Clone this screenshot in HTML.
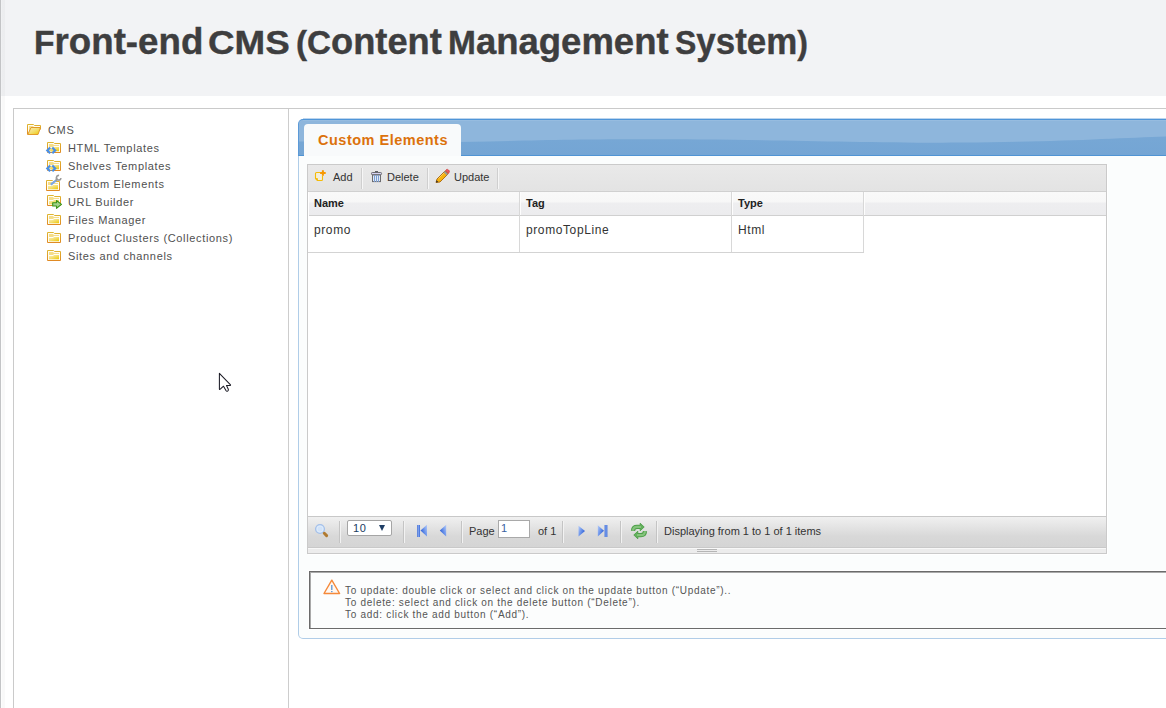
<!DOCTYPE html>
<html><head><meta charset="utf-8">
<style>
*{box-sizing:border-box;margin:0;padding:0}
html,body{width:1166px;height:708px;overflow:hidden;background:#fff;font-family:"Liberation Sans",sans-serif}
.abs{position:absolute}
svg{position:absolute;overflow:visible}
#lstrip{left:0;top:0;width:1px;height:708px;background:#c3c4c6}
#lstrip2{left:1px;top:0;width:4px;height:708px;background:linear-gradient(90deg,rgba(0,0,0,0.008) 1px,rgba(0,0,0,0.025) 1px)}
#header{left:1px;top:0;width:1165px;height:96px;background:#f2f3f5}
.tw{top:22px;font-weight:bold;color:#3e3e3f;white-space:nowrap;line-height:40px;font-size:36px;-webkit-text-stroke:0.4px #3e3e3f;transform-origin:0 0}
.tw .c{font-size:33px}
#box{left:13px;top:108px;width:1160px;height:620px;border:1px solid #cacaca;background:#fff}
#divider{left:288px;top:109px;width:1px;height:600px;background:#cdcdcd}
.tree{font-size:11px;color:#505050;white-space:nowrap;line-height:14px;letter-spacing:0.65px}
#pbody{left:298px;top:150px;width:900px;height:489px;border:1px solid #b0cde8;border-top:none;border-radius:0 0 0 5px;background:#fbfdfd}
#strip{left:298px;top:119px;width:900px;height:37px;border-top-left-radius:5px;border-top:1px solid #4f95d8;border-left:1px solid #5c9ad8;border-bottom:1px solid #4f94d4;background:linear-gradient(#79a9d6,#74a5d4)}
#tab{left:304px;top:124px;width:157px;height:32px;border-radius:4px 4px 0 0;background:#f8fafb}
#tabtxt{left:318px;top:131px;font-size:14.5px;font-weight:bold;color:#dc720c;letter-spacing:0.5px;white-space:nowrap;line-height:18px}
#grid{left:307px;top:164px;width:800px;height:390px;border:1px solid #cacaca;background:#fff;box-shadow:1px 1px 0 #fff}
#tbar{left:308px;top:165px;width:798px;height:27px;background:linear-gradient(#e9e9e9,#e3e3e3);border-bottom:1px solid #d0d0d0}
.tsep{top:168px;height:21px;border-left:1px solid #cfcfcf;border-right:1px solid #f6f6f6;width:2px}
.tbtxt{font-size:11px;color:#333;white-space:nowrap;line-height:14px;top:170px}
#ghead{left:309px;top:192px;width:797px;height:24px;background:linear-gradient(#f9f9f9 0,#f7f7f7 10px,#eeeef0 11px,#ececee 100%);border-bottom:1px solid #d0d0d0}
.hsep{top:192px;width:1px;height:61px;background:#d8d8d8}
.hhl{top:192px;width:1px;height:23px;background:#fdfdfd}
.htxt{font-size:11px;font-weight:bold;color:#222;top:196px;line-height:14px}
.ctxt{font-size:12px;color:#333;top:223px;line-height:14px;letter-spacing:0.6px}
#rowb{left:308px;top:252px;width:556px;height:1px;background:#d3d3d3}
#pbar{left:308px;top:516px;width:798px;height:32px;border-top:1px solid #c8c8c8;border-bottom:1px solid #c9c9c9;background:linear-gradient(#f0f0f0,#d8d8d8 65%,#d5d5d5)}
#pbar2{left:308px;top:548px;width:798px;height:5px;background:#ececec;border-top:1px solid #f8f8f8}
.psep{top:521px;width:2px;height:22px;border-left:1px solid #c4c4c4;border-right:1px solid #f2f2f2}
.ptxt{font-size:11px;color:#333;white-space:nowrap;line-height:14px;top:524px}
#info{left:309px;top:571px;width:870px;height:58px;border:1px solid #6b6b6b;box-shadow:inset 1px 1px 0 #a9a9a9,0 0 0 1px #fff;background:#fcfdfd}
.itxt{font-size:10px;color:#555;white-space:nowrap;line-height:12px;left:345px;letter-spacing:0.7px}
</style></head><body>
<div class="abs" id="header"></div>
<div class="abs" id="lstrip"></div>
<div class="abs" id="lstrip2"></div>
<div class="abs tw" style="left:33.5px;transform:scaleX(1.019)"><span class="c">F</span>ront-end</div>
<div class="abs tw" style="left:208px;transform:scaleX(1.114)"><span class="c">CMS</span></div>
<div class="abs tw" style="left:295.7px;transform:scaleX(1.007)"><span class="c">(C</span>ontent</div>
<div class="abs tw" style="left:447.8px;transform:scaleX(1.014)"><span class="c">M</span>anagement</div>
<div class="abs tw" style="left:674.7px;transform:scaleX(0.97)"><span class="c">S</span>ystem<span class="c">)</span></div>
<div class="abs" id="box"></div>
<div class="abs" id="divider"></div>

<svg width="0" height="0" style="position:absolute">
<defs>
<linearGradient id="fo" x1="0" y1="0" x2="0" y2="1"><stop offset="0" stop-color="#dfb530"/><stop offset="1" stop-color="#e08a24"/></linearGradient>
<linearGradient id="fb" x1="0" y1="0" x2="1" y2="1"><stop offset="0" stop-color="#fbf0b8"/><stop offset="0.5" stop-color="#f3de70"/><stop offset="1" stop-color="#eec800"/></linearGradient>
<g id="fold"><path d="M0.5 0.5H6.5L7.5 1.5H13.5V10.5H0.5Z" fill="#fffdf4" stroke="url(#fo)" stroke-linejoin="round"/><path d="M2 2h4l1 1h5v1h-5l-1 1h-4z" fill="#f1d266" opacity="0.75"/><path d="M2 6h4l1-1h5v4.2h-10z" fill="url(#fb)"/></g>
</defs>
</svg>

<!-- tree icons -->
<svg style="left:27px;top:124px" width="15" height="12"><path d="M0.5 10.5V0.5H6.5L7.5 1.5H13.5V5.5" fill="#fffdf4" stroke="url(#fo)" stroke-linejoin="round"/><path d="M2 2h4l1 1h5v1h-7l-3 4z" fill="#f1d266" opacity="0.7"/><path d="M0.8 10.5L4 3.5H13.5L11 10.5Z" fill="url(#fb)" stroke="#e29a2a" stroke-linejoin="round"/></svg>
<svg style="left:47px;top:142px" width="15" height="13"><use href="#fold"/><circle cx="5" cy="8.4" r="1.2" fill="#f3d860"/><path d="M3.2 5.5L0.3 8.4L3.2 11.3M5.3 5.5L8.2 8.4L5.3 11.3" fill="none" stroke="#4b8fe4" stroke-width="2.2"/></svg>
<svg style="left:47px;top:160px" width="15" height="13"><use href="#fold"/><circle cx="5" cy="8.4" r="1.2" fill="#f3d860"/><path d="M3.2 5.5L0.3 8.4L3.2 11.3M5.3 5.5L8.2 8.4L5.3 11.3" fill="none" stroke="#4b8fe4" stroke-width="2.2"/></svg>
<svg style="left:46px;top:180px" width="15" height="12"><use href="#fold"/><path d="M4.8 4.6L10.2 0.2" stroke="#7aa6e6" stroke-width="2.1"/><path d="M9.8 0.6L11.6 -1.2" stroke="#9c9c9c" stroke-width="2"/><path d="M15 -1.8A2.3 2.3 0 1 1 13.1 -4.5" fill="none" stroke="#9a9a9a" stroke-width="1.7"/></svg>
<svg style="left:47px;top:195px" width="16" height="15"><use href="#fold"/><path d="M5.7 7.8H9.5V5.5L14.5 9.4L9.5 13.3V11H5.7Z" fill="#a2d28c" stroke="#3c9418" stroke-width="1.1" stroke-linejoin="round"/></svg>
<svg style="left:47px;top:214px" width="15" height="12"><use href="#fold"/></svg>
<svg style="left:47px;top:232px" width="15" height="12"><use href="#fold"/></svg>
<svg style="left:47px;top:250px" width="15" height="12"><use href="#fold"/></svg>

<div class="abs tree" style="left:48px;top:123px">CMS</div>
<div class="abs tree" style="left:68px;top:141px">HTML Templates</div>
<div class="abs tree" style="left:68px;top:159px">Shelves Templates</div>
<div class="abs tree" style="left:68px;top:177px">Custom Elements</div>
<div class="abs tree" style="left:68px;top:195px">URL Builder</div>
<div class="abs tree" style="left:68px;top:213px">Files Manager</div>
<div class="abs tree" style="left:68px;top:231px">Product Clusters (Collections)</div>
<div class="abs tree" style="left:68px;top:249px">Sites and channels</div>

<!-- cursor -->
<svg style="left:218px;top:372px" width="16" height="22"><path d="M1.4 1.4V16.9Q1.4 17.9 2.3 17.2L5.5 14.2L8.1 18.8Q8.7 19.6 9.6 19L10.1 18.6Q10.6 18.1 10.3 17.3L8.5 13.5H12.1Q12.9 13.3 12.3 12.6Z" fill="#fff" stroke="#1c1c26" stroke-width="1.05" stroke-linejoin="round"/></svg>

<div class="abs" id="pbody"></div>
<div class="abs" id="strip"></div>
<div class="abs" style="left:303px;top:118px;width:863px;height:1px;background:#bcd5ee"></div><svg style="left:299px;top:120px" width="867" height="35"><path d="M0 21.5C80 22 140 22.8 190 21.5C250 20 300 19 400 19.5C500 20 560 23 662 22.6C760 22 820 18 867 16.5V0H4Q0 0 0 4Z" fill="#8eb6dc"/><path d="M4 0.5H867" stroke="#9cc1e4" stroke-width="1" opacity="0.6"/></svg>
<div class="abs" id="tab"></div>
<div class="abs" id="tabtxt">Custom Elements</div>

<div class="abs" id="grid"></div>
<div class="abs" id="tbar"></div>
<svg style="left:315px;top:169px" width="13" height="13"><path d="M5.5 3.5H1.5Q0.5 3.5 0.5 4.5V9.5L2.5 11.5H6.5Q7.5 11.5 7.5 10.5V7" fill="#f3efdc" stroke="#f5bb08" stroke-width="1.1" stroke-linejoin="round"/><path d="M0.5 9.5H2.5V11.5" fill="none" stroke="#f5bb08" stroke-width="0.9"/><path d="M7.9 1.2V6.8M5.1 4H10.7" stroke="#f79800" stroke-width="2"/></svg>
<div class="abs tbtxt" style="left:333px">Add</div>
<div class="abs tsep" style="left:361px"></div>
<svg style="left:370px;top:170px" width="13" height="14"><rect x="5" y="1" width="3" height="1.6" fill="#5f6068"/><rect x="1.5" y="2.5" width="10" height="2.2" rx="0.8" fill="#d6d2f2" stroke="#6c6c70"/><rect x="2.5" y="5" width="8" height="6.6" fill="#dfeaf8" stroke="#6c6c70"/><path d="M4.5 5v7M6.5 5v7M8.5 5v7" stroke="#7d9fd2" stroke-width="1"/></svg>
<div class="abs tbtxt" style="left:387px">Delete</div>
<div class="abs tsep" style="left:427px"></div>
<svg style="left:435px;top:169px" width="15" height="15"><path d="M1 13.5L2 10L10 2L13 5L5 13Z" fill="#f6b20e" stroke="#a86510" stroke-width="0.9" stroke-linejoin="round"/><path d="M3.5 9.5l6-6" stroke="#fcd25a" stroke-width="1"/><path d="M9.3 2.7L12.3 5.7" stroke="#9a9a9a" stroke-width="1.8"/><path d="M10.5 1.5L11.5 0.6Q12.5 0 13.5 1L14 1.5Q14.8 2.5 14 3.5L13.5 4.5Z" fill="#ea5a5a" stroke="#cf3a3a" stroke-width="0.8"/><path d="M1 13.5L1.6 11.2L3.3 12.9Z" fill="#2a2a2a"/></svg>
<div class="abs tbtxt" style="left:454px">Update</div>
<div class="abs tsep" style="left:497px"></div>

<div class="abs" id="ghead"></div>
<div class="abs hsep" style="left:519px"></div>
<div class="abs hsep" style="left:731px"></div>
<div class="abs hsep" style="left:863px;height:61px"></div>
<div class="abs hhl" style="left:520px"></div><div class="abs hhl" style="left:732px"></div><div class="abs hhl" style="left:864px"></div>
<div class="abs htxt" style="left:314px">Name</div>
<div class="abs htxt" style="left:526px">Tag</div>
<div class="abs htxt" style="left:738px">Type</div>
<div class="abs ctxt" style="left:314px">promo</div>
<div class="abs ctxt" style="left:526px">promoTopLine</div>
<div class="abs ctxt" style="left:738px">Html</div>
<div class="abs" id="rowb"></div>

<div class="abs" id="pbar"></div>
<div class="abs" id="pbar2"></div>
<svg style="left:314px;top:523px" width="16" height="16"><circle cx="6" cy="6" r="4.4" fill="#d2e3f8" stroke="#a4c0ea" stroke-width="1.3"/><circle cx="6" cy="6" r="3" fill="none" stroke="#e6f0fc" stroke-width="0.6"/><path d="M10.3 10.3L12.6 12.6" stroke="#b07a30" stroke-width="3" stroke-linecap="round"/></svg>
<div class="abs psep" style="left:339px"></div>
<div class="abs" style="left:347px;top:520px;width:45px;height:16px;border:1px solid #a5a5a5;border-radius:2px;background:#fff"></div>
<div class="abs" style="left:353px;top:522px;font-size:11px;color:#203c62;line-height:12px;letter-spacing:0.6px">10</div>
<svg style="left:379px;top:524px" width="7" height="8"><path d="M0 1h6l-3 6z" fill="#1f3e66"/></svg>
<div class="abs psep" style="left:403px"></div>
<svg width="0" height="0" style="position:absolute"><defs><linearGradient id="tgl" x1="1" y1="0.2" x2="0" y2="0.8"><stop offset="0" stop-color="#a9c3f7"/><stop offset="0.55" stop-color="#5a86e6"/><stop offset="1" stop-color="#1f4fcf"/></linearGradient><linearGradient id="tgr" x1="0" y1="0.2" x2="1" y2="0.8"><stop offset="0" stop-color="#a9c3f7"/><stop offset="0.55" stop-color="#5a86e6"/><stop offset="1" stop-color="#1f4fcf"/></linearGradient><linearGradient id="gbar" x1="0" y1="0" x2="1" y2="0"><stop offset="0" stop-color="#3566d6"/><stop offset="0.5" stop-color="#7fa2ee"/><stop offset="1" stop-color="#3566d6"/></linearGradient></defs></svg>
<svg style="left:417px;top:525px" width="11" height="12"><rect x="0.2" y="0" width="2.8" height="12" fill="url(#gbar)"/><path d="M10 -0.2V11.6L3.5 5.5Z" fill="url(#tgl)"/></svg>
<svg style="left:440px;top:525px" width="7" height="12"><path d="M6.2 -0.2V11.6L-0.2 5.5Z" fill="url(#tgl)"/></svg>
<div class="abs psep" style="left:461px"></div>
<div class="abs ptxt" style="left:469px">Page</div>
<div class="abs" style="left:498px;top:520px;width:32px;height:18px;border:1px solid #a9a9a9;background:#fff"></div>
<div class="abs" style="left:501px;top:521px;font-size:11px;color:#3a62a0;line-height:14px">1</div>
<div class="abs ptxt" style="left:538px">of 1</div>
<div class="abs psep" style="left:562px"></div>
<svg style="left:578px;top:526px" width="8" height="11"><path d="M0.5 -0.2V10.4L7 5.1Z" fill="url(#tgr)"/></svg>
<svg style="left:597px;top:525px" width="11" height="12"><path d="M0.8 0.2V11.4L7 5.8Z" fill="url(#tgr)"/><rect x="7.6" y="0" width="2.8" height="12" fill="url(#gbar)"/></svg>
<div class="abs psep" style="left:620px"></div>
<svg style="left:626px;top:520px" width="26" height="22"><defs><g id="rarr"><path d="M7 10.8Q7.2 6.9 11 6.9H14.8" fill="none" stroke="#4f9f4a" stroke-width="4.2"/><path d="M14.2 3.2L18.2 7L14.2 10.8Z" fill="#62b05c" stroke="#4f9f4a" stroke-width="0.9" stroke-linejoin="round"/><path d="M7 10.8Q7.2 6.9 11 6.9H15" fill="none" stroke="#84c47c" stroke-width="2.2"/></g></defs><use href="#rarr"/><use href="#rarr" transform="rotate(180 13 11)"/></svg>
<div class="abs psep" style="left:656px"></div>
<div class="abs ptxt" style="left:664px">Displaying from 1 to 1 of 1 items</div>
<div class="abs" style="left:697px;top:549px;width:20px;height:3px;border-top:1px solid #b5b5b5;border-bottom:1px solid #b5b5b5"></div>

<div class="abs" id="info"></div>
<svg style="left:322px;top:579px" width="19" height="16"><path d="M9.8 1.2l7.8 13.3h-15.6z" fill="#fff8f2" stroke="#f5893a" stroke-width="1.4" stroke-linejoin="round"/><path d="M9.8 6v5" stroke="#5a95d4" stroke-width="1.3"/><rect x="9.1" y="12" width="1.4" height="1.2" fill="#5a95d4"/></svg>
<div class="abs itxt" style="top:585px">To update: double click or select and click on the update button (“Update”)..</div>
<div class="abs itxt" style="top:597px">To delete: select and click on the delete button (“Delete”).</div>
<div class="abs itxt" style="top:609px">To add: click the add button (“Add”).</div>

</body></html>
